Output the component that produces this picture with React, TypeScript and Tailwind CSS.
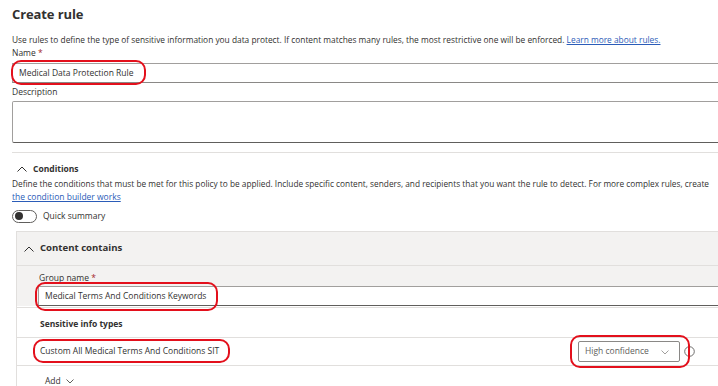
import React from "react";

function Oval({ className }: { className: string }) {
  return (
    <div
      className={
        "pointer-events-none absolute rounded-[10px] border-[2.5px] border-[#e3101c] " +
        className
      }
    />
  );
}

function ChevronUp({ className }: { className?: string }) {
  return (
    <svg className={className} width="10" height="6" viewBox="0 0 10 6" fill="none">
      <polyline points="0.5,5.5 5,1 9.5,5.5" stroke="#323130" strokeWidth="1" />
    </svg>
  );
}

export default function App() {
  return (
    <div className="w-[718px] h-[386px] overflow-hidden bg-white text-[#323130] font-['Open_Sans','Noto_Sans',sans-serif]">
      <div className="w-[800px] pl-[12px] flex flex-col">
        <div className="mt-[4px] h-[20px] leading-[20px] text-[13px] font-bold tracking-[-0.1px]">
          Create rule
        </div>
        <div className="mt-[10px] text-[8.35px] leading-[12px] whitespace-nowrap">
          Use rules to define the type of sensitive information you data protect. If content matches many rules, the most restrictive one will be enforced.{" "}
          <span className="text-[#2b5cb8] underline">Learn more about rules.</span>
        </div>
        <div className="mt-[1px] text-[8.5px] leading-[12px]">
          Name <span className="text-[#a4262c]">*</span>
        </div>
        <div className="relative mt-[4px] h-[20px] border border-[#a19f9d] border-b-[#8a8886] flex items-center pl-[6px] text-[8.5px]">
          Medical Data Protection Rule
          <Oval className="left-[-2px] top-[-4px] w-[135px] h-[25px]" />
        </div>
        <div className="mt-[3px] text-[8.5px] leading-[12px]">Description</div>
        <div className="mt-[3px] h-[42px] border border-[#a19f9d] border-b-[#605e5c] rounded-[2px]" />
        <div className="mt-[9px] h-px bg-[#e1dfdd]" />
        <div className="mt-[9px] h-[14px] flex items-center">
          <ChevronUp className="ml-[5px]" />
          <span className="ml-[6px] text-[8.5px] font-bold">Conditions</span>
        </div>
        <div className="mt-[1px] text-[8.3px] leading-[13px] whitespace-nowrap">
          Define the conditions that must be met for this policy to be applied. Include specific content, senders, and recipients that you want the rule to detect. For more complex rules, create
        </div>
        <div className="text-[8.5px] leading-[13px] text-[#2b5cb8] underline">the condition builder works</div>
        <div className="mt-[6px] h-[14px] flex items-center">
          <div className="w-[25px] h-[13px] rounded-full border border-[#605e5c] flex items-center pl-[2px]">
            <div className="w-[8px] h-[8px] rounded-full bg-[#323130]" />
          </div>
          <span className="ml-[6px] text-[8.5px]">Quick summary</span>
        </div>

        <div className="mt-[8px] ml-[4px] border border-[#e1dfdd] flex flex-col">
          <div className="h-[34px] bg-[#f3f2f1] border-b border-[#e1dfdd] flex items-center">
            <ChevronUp className="ml-[7px]" />
            <span className="ml-[6px] text-[9.6px] font-bold">Content contains</span>
          </div>
          <div className="bg-[#f3f2f1] pl-[21px] pt-[6px] flex flex-col">
            <div className="text-[8.5px] leading-[12px] pl-[1px]">
              Group name <span className="text-[#a4262c]">*</span>
            </div>
            <div className="relative mt-[2px] h-[20px] bg-white border border-[#a19f9d] border-b-[#605e5c] flex items-center pl-[6px] text-[8.5px]">
              Medical Terms And Conditions Keywords
              <Oval className="left-[-4px] top-[-5px] w-[183px] h-[29px]" />
            </div>
          </div>
          <div className="mt-[1px] h-[31px] pt-[3px] border-t border-[#e1dfdd] border-b flex items-center pl-[23px] text-[8.5px] font-bold">
            Sensitive info types
          </div>
          <div className="relative h-[28px] border-b border-[#e1dfdd] flex items-center pl-[23px] text-[8.5px]">
            Custom All Medical Terms And Conditions SIT
            <Oval className="left-[16px] top-[1px] w-[197px] h-[24px]" />
            <div className="absolute left-[561px] top-[3px] w-[102px] h-[21px] border border-[#8a8886] rounded-[2px] flex items-center pl-[6px] text-[#605e5c]">
              High confidence
              <svg className="absolute right-[10px] top-[8px]" width="8" height="5" viewBox="0 0 8 5" fill="none">
                <polyline points="0.5,0.5 4,4 7.5,0.5" stroke="#a19f9d" strokeWidth="1" />
              </svg>
            </div>
            <svg className="absolute left-[667px] top-[8px]" width="11" height="11" viewBox="0 0 11 11" fill="none">
              <circle cx="5.5" cy="5.5" r="4.8" stroke="#605e5c" strokeWidth="0.9" />
              <line x1="5.5" y1="4.8" x2="5.5" y2="8" stroke="#605e5c" strokeWidth="0.9" />
              <circle cx="5.5" cy="3.3" r="0.6" fill="#605e5c" />
            </svg>
            <Oval className="left-[553px] top-[-3px] w-[120px] h-[33px]" />
          </div>
          <div className="h-[30px] flex items-center pl-[28px] text-[8.5px]">
            Add
            <svg className="ml-[5px]" width="8" height="5" viewBox="0 0 8 5" fill="none">
              <polyline points="0.5,0.5 4,4 7.5,0.5" stroke="#605e5c" strokeWidth="1" />
            </svg>
          </div>
        </div>
      </div>
    </div>
  );
}
